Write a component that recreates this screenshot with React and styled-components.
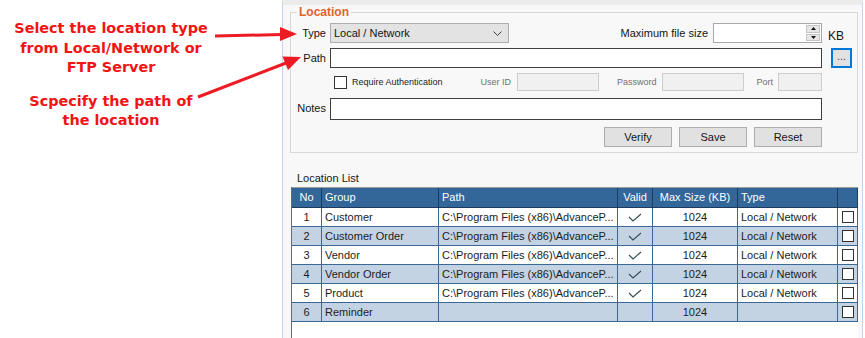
import React from "react";
import styled, { createGlobalStyle } from "styled-components";

const GlobalStyle = createGlobalStyle`
  html, body {
    margin: 0;
    padding: 0;
    background: #ffffff;
  }
  body {
    font-family: "Liberation Sans", Arial, sans-serif;
  }
`;

const Page = styled.div`
  position: relative;
  display: flex;
  width: 865px;
  height: 338px;
  overflow: hidden;
  background: #ffffff;
`;

const Callouts = styled.div`
  width: 282px;
  flex: none;
  display: flex;
  flex-direction: column;
  padding-top: 19px;
  box-sizing: border-box;
`;

const Callout = styled.div`
  width: 222px;
  margin-top: ${(p) => p.gap || 0}px;
  font-family: "DejaVu Sans", "Noto Sans", sans-serif;
  font-weight: 700;
  font-size: 14.4px;
  line-height: 19.5px;
  color: #f21414;
  text-align: center;
`;

const ArrowLayer = styled.svg`
  position: absolute;
  left: 0;
  top: 0;
  pointer-events: none;
`;

const Window = styled.div`
  width: 581px;
  flex: none;
  display: flex;
  flex-direction: column;
  box-sizing: border-box;
  border-left: 1px solid #c3d5ea;
  border-right: 1px solid #c3d5ea;
  border-top: 5px solid #ebebeb;
  background: #f8f8f8;
  padding: 0 4px 0 7px;
  font-size: 11px;
  color: #151515;
`;

const Group = styled.fieldset`
  margin: 0;
  padding: 4px 0 5px;
  border: 1px solid #d8d8d8;
  min-width: 0;
  display: flex;
  flex-direction: column;
`;

const Legend = styled.legend`
  margin-left: 6px;
  padding: 0 2px;
  font-size: 12px;
  line-height: 14px;
  font-weight: 700;
  color: #e0622e;
`;

const FormRow = styled.div`
  display: grid;
  grid-template-columns: 39px 492px 35px;
  height: ${(p) => p.h}px;
  margin-top: ${(p) => p.space || 0}px;
`;

const FieldLabel = styled.div`
  padding-right: 4px;
  text-align: right;
  line-height: 13px;
  align-self: ${(p) => (p.top ? "start" : "center")};
  padding-top: ${(p) => (p.top ? 4 : 0)}px;
`;

const Middle = styled.div`
  display: flex;
  align-items: center;
  justify-content: ${(p) => p.justify || "flex-start"};
`;

const Trailing = styled.div`
  display: flex;
  align-items: ${(p) => (p.bottom ? "flex-end" : "center")};
  padding-left: ${(p) => p.pad || 0}px;
  font-size: ${(p) => p.size || 11}px;
  line-height: 13px;
`;

const Combo = styled.div`
  width: 179px;
  height: 20px;
  box-sizing: border-box;
  border: 1px solid #adadad;
  background: #e3e3e3;
  display: flex;
  align-items: center;
  justify-content: space-between;
  padding: 0 6px 0 3px;
`;

const InlineGroup = styled.div`
  display: flex;
  align-items: center;
  gap: ${(p) => p.gap || 0}px;
  margin-left: ${(p) => (p.auto ? "auto" : "0")};
`;

const Spin = styled.div`
  width: 109px;
  height: 20px;
  box-sizing: border-box;
  border: 1px solid #a8a8a8;
  background: #ffffff;
  display: flex;
  justify-content: flex-end;
  padding: 1px;
`;

const SpinButtons = styled.div`
  width: 14px;
  display: flex;
  flex-direction: column;
  gap: 1px;
`;

const SpinButton = styled.div`
  flex: 1;
  background: #e6e6e6;
  border: 1px solid #c4c4c4;
  display: flex;
  align-items: center;
  justify-content: center;
`;

const TextBox = styled.div`
  flex: 1;
  align-self: stretch;
  box-sizing: border-box;
  border: 1px solid #3f3f3f;
  background: #ffffff;
`;

const BrowseButton = styled.div`
  width: 21px;
  height: 20px;
  margin-top: -1px;
  box-sizing: border-box;
  border: 2px solid #0078d7;
  background: #e1e1e1;
  color: #5a1f8c;
  font-size: 11px;
  line-height: 12px;
  text-align: center;
`;

const CheckBox = styled.div`
  width: ${(p) => p.size || 13}px;
  height: ${(p) => p.size || 13}px;
  box-sizing: border-box;
  border: 1px solid #333333;
  background: #ffffff;
  margin-left: ${(p) => p.lead || 0}px;
  flex: none;
`;

const SmallText = styled.span`
  font-size: 9px;
  line-height: 11px;
  color: ${(p) => (p.dim ? "#707070" : "#1a1a1a")};
  margin-left: ${(p) => p.lead || 0}px;
  margin-right: ${(p) => p.trail || 0}px;
  white-space: nowrap;
`;

const DisabledBox = styled.div`
  width: ${(p) => p.w}px;
  height: 18px;
  box-sizing: border-box;
  border: 1px solid #cccccc;
  background: #f0f0f0;
  flex: none;
`;

const ActionButton = styled.div`
  width: 68px;
  height: 20px;
  box-sizing: border-box;
  border: 1px solid #adadad;
  background: #e1e1e1;
  text-align: center;
  line-height: 18px;
  font-size: 11px;
`;

const ListLabel = styled.div`
  margin: 18px 0 2px 7px;
  line-height: 14px;
`;

const GridBox = styled.div`
  flex: 1;
  margin-left: 1px;
  border-left: 1px solid #6a6a6a;
  background: #ffffff;
`;

const COLUMNS = "30px 117px 179px 35px 85px 100px 20px";

const HeaderRow = styled.div`
  display: grid;
  grid-template-columns: ${COLUMNS};
  height: 21px;
  box-sizing: border-box;
  border-top: 1px solid #9c9c9c;
  background: #336699;
  color: #ffffff;
`;

const HeaderCell = styled.div`
  box-sizing: border-box;
  border-right: 1px solid #1d3b5e;
  border-bottom: 1px solid #1d3b5e;
  padding: 0 ${(p) => (p.center ? 0 : 3)}px;
  text-align: ${(p) => (p.center ? "center" : "left")};
  line-height: 19px;
  white-space: nowrap;
  overflow: hidden;
`;

const DataRow = styled.div`
  display: grid;
  grid-template-columns: ${COLUMNS};
  height: 19px;
  background: ${(p) => (p.alt ? "#c3d3e3" : "#ffffff")};
`;

const DataCell = styled.div`
  box-sizing: border-box;
  border-right: 1px solid #3b6894;
  border-bottom: 1px solid #3b6894;
  padding: 0 ${(p) => (p.center ? 0 : 3)}px;
  display: flex;
  align-items: center;
  justify-content: ${(p) => (p.center ? "center" : "flex-start")};
  line-height: 18px;
  white-space: nowrap;
  overflow: hidden;
  color: #1c1c1c;
`;

const ChevronDown = () => (
  <svg width="9" height="5" viewBox="0 0 9 5">
    <path d="M0.5 0.5 L4.5 4.5 L8.5 0.5" fill="none" stroke="#404040" strokeWidth="1" />
  </svg>
);

const Triangle = ({ up }) => (
  <svg width="5" height="3" viewBox="0 0 5 3">
    <path d={up ? "M0 3 L2.5 0 L5 3 Z" : "M0 0 L5 0 L2.5 3 Z"} fill="#111111" />
  </svg>
);

const Tick = () => (
  <svg width="14" height="9" viewBox="0 0 14 9">
    <path d="M1 4 L5 8 L13 1" fill="none" stroke="#2f4f4f" strokeWidth="1.1" />
  </svg>
);

const LONG_PATH = "C:\\Program Files (x86)\\AdvanceP...";

const rows = [
  { no: 1, group: "Customer", path: LONG_PATH, valid: true, size: 1024, type: "Local / Network" },
  { no: 2, group: "Customer Order", path: LONG_PATH, valid: true, size: 1024, type: "Local / Network" },
  { no: 3, group: "Vendor", path: LONG_PATH, valid: true, size: 1024, type: "Local / Network" },
  { no: 4, group: "Vendor Order", path: LONG_PATH, valid: true, size: 1024, type: "Local / Network" },
  { no: 5, group: "Product", path: LONG_PATH, valid: true, size: 1024, type: "Local / Network" },
  { no: 6, group: "Reminder", path: "", valid: false, size: 1024, type: "" },
];

const RED = "#ed1c24";

export default function App() {
  return (
    <Page>
      <GlobalStyle />
      <Callouts>
        <Callout>
          Select the location type
          <br />
          from Local/Network or
          <br />
          FTP Server
        </Callout>
        <Callout gap={14}>
          Scpecify the path of
          <br />
          the location
        </Callout>
      </Callouts>

      <Window>
        <Group>
          <Legend>Location</Legend>

          <FormRow h={20}>
            <FieldLabel>Type</FieldLabel>
            <Middle justify="space-between">
              <Combo>
                <span>Local / Network</span>
                <ChevronDown />
              </Combo>
              <InlineGroup gap={5}>
                <span>Maximum file size</span>
                <Spin>
                  <SpinButtons>
                    <SpinButton>
                      <Triangle up />
                    </SpinButton>
                    <SpinButton>
                      <Triangle />
                    </SpinButton>
                  </SpinButtons>
                </Spin>
              </InlineGroup>
            </Middle>
            <Trailing bottom pad={6} size={12}>
              KB
            </Trailing>
          </FormRow>

          <FormRow h={20} space={5}>
            <FieldLabel>Path</FieldLabel>
            <Middle>
              <TextBox />
            </Middle>
            <Trailing pad={9}>
              <BrowseButton>...</BrowseButton>
            </Trailing>
          </FormRow>

          <FormRow h={18} space={5}>
            <div />
            <Middle>
              <CheckBox lead={4} />
              <SmallText lead={5}>Require Authentication</SmallText>
              <InlineGroup auto>
                <SmallText dim trail={6}>User ID</SmallText>
                <DisabledBox w={82} />
                <SmallText dim lead={18} trail={6}>Password</SmallText>
                <DisabledBox w={82} />
                <SmallText dim lead={12} trail={5}>Port</SmallText>
                <DisabledBox w={44} />
              </InlineGroup>
            </Middle>
            <div />
          </FormRow>

          <FormRow h={22} space={7}>
            <FieldLabel top>Notes</FieldLabel>
            <Middle>
              <TextBox />
            </Middle>
            <div />
          </FormRow>

          <FormRow h={20} space={7}>
            <div />
            <Middle justify="flex-end">
              <InlineGroup gap={7}>
                <ActionButton>Verify</ActionButton>
                <ActionButton>Save</ActionButton>
                <ActionButton>Reset</ActionButton>
              </InlineGroup>
            </Middle>
            <div />
          </FormRow>
        </Group>

        <ListLabel>Location List</ListLabel>
        <GridBox>
          <HeaderRow>
            <HeaderCell center>No</HeaderCell>
            <HeaderCell>Group</HeaderCell>
            <HeaderCell>Path</HeaderCell>
            <HeaderCell center>Valid</HeaderCell>
            <HeaderCell center>Max Size (KB)</HeaderCell>
            <HeaderCell>Type</HeaderCell>
            <HeaderCell />
          </HeaderRow>
          {rows.map((r, i) => (
            <DataRow key={r.no} alt={i % 2 === 1}>
              <DataCell center>{r.no}</DataCell>
              <DataCell>{r.group}</DataCell>
              <DataCell>{r.path}</DataCell>
              <DataCell center>{r.valid && <Tick />}</DataCell>
              <DataCell center>{r.size}</DataCell>
              <DataCell>{r.type}</DataCell>
              <DataCell center>
                <CheckBox size={12} />
              </DataCell>
            </DataRow>
          ))}
        </GridBox>
      </Window>

      <ArrowLayer width="865" height="338" viewBox="0 0 865 338">
        <line x1="215" y1="36" x2="282" y2="34.5" stroke={RED} strokeWidth="3" />
        <polygon points="297,34 280,27 280,41" fill={RED} />
        <line x1="198" y1="97" x2="286" y2="63" stroke={RED} strokeWidth="3" />
        <polygon points="301,57 282.5,56.5 288,70" fill={RED} />
      </ArrowLayer>
    </Page>
  );
}
